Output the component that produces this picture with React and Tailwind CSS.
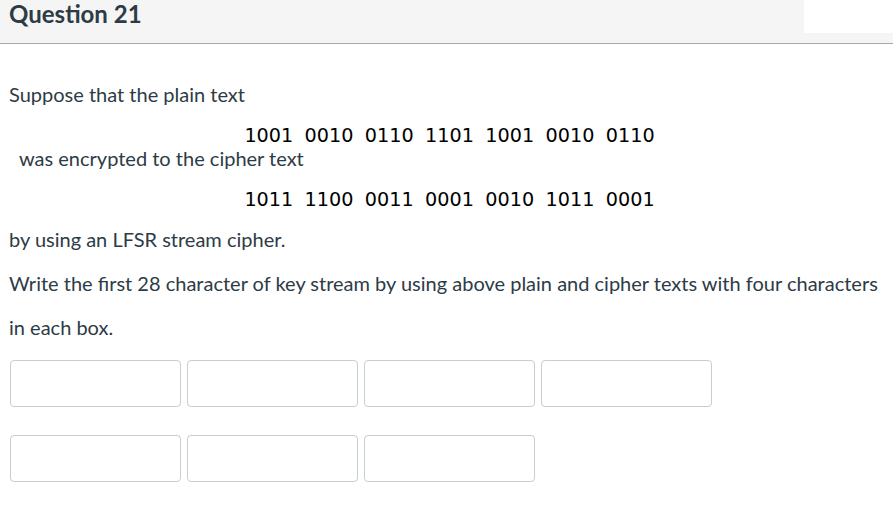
import React from 'react';

const plain = '1001 0010 0110 1101 1001 0010 0110';
const cipher = '1011 1100 0011 0001 0010 1011 0001';

const AnswerBox = () => (
  <input
    type="text"
    className="w-[171px] h-[47px] rounded-[4px] border border-[#c7cdd1] bg-white px-2 outline-none"
  />
);

const App = () => {
  return (
    <div className="w-[896px] h-[510px] bg-white text-[#2d3b45] font-['Lato','Noto_Sans',sans-serif] overflow-hidden">
      {/* header */}
      <div className="w-[893px] h-[44px] bg-[#f5f5f5] border-b border-[#a8a8a8] flex justify-between">
        <h2 className="pl-[9px] text-[24px] leading-[28px] font-bold">Question 21</h2>
        <div className="w-[89px] h-[33px] bg-white" />
      </div>

      <div className="pl-[9px] text-[20px]">
        <p className="mt-[38px] leading-[24px]">Suppose that the plain text</p>
        <p className="mt-[18px] -mb-[2px] pr-[6px] leading-[24px] text-center text-black font-['DejaVu_Sans',sans-serif] text-[19.2px] [word-spacing:5.3px] whitespace-pre">
          {plain}
        </p>
        <p className="leading-[24px] pl-[10px]">was encrypted to the cipher text</p>
        <p className="mt-[18px] -mb-[2px] pr-[6px] leading-[24px] text-center text-black font-['DejaVu_Sans',sans-serif] text-[19.2px] [word-spacing:5.3px] whitespace-pre">
          {cipher}
        </p>
        <p className="mt-[17px] leading-[24px]">by using an LFSR stream cipher.</p>
        <p className="mt-[10px] leading-[44px] w-[880px]">
          Write the first 28 character of key stream by using above plain and cipher texts with four characters in each box.
        </p>

        <div className="mt-[11px] flex flex-col gap-[28px] pl-[1px]">
          <div className="flex gap-[6px]">
            <AnswerBox />
            <AnswerBox />
            <AnswerBox />
            <AnswerBox />
          </div>
          <div className="flex gap-[6px]">
            <AnswerBox />
            <AnswerBox />
            <AnswerBox />
          </div>
        </div>
      </div>
    </div>
  );
};

export default App;
